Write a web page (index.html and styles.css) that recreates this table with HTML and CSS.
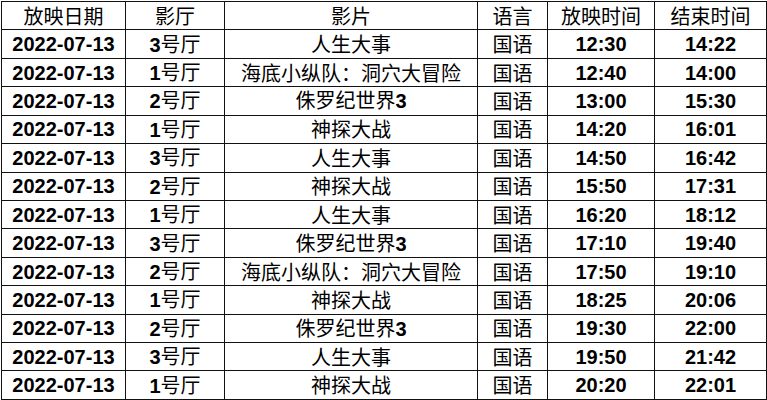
FILE: index.html
```html
<!DOCTYPE html>
<html lang="zh">
<head>
<meta charset="utf-8">
<title>放映时间表</title>
<link rel="stylesheet" href="styles.css">
</head>
<body>
<div class="page">
<table class="schedule">
  <colgroup>
    <col class="c-date"><col class="c-hall"><col class="c-film"><col class="c-lang"><col class="c-start"><col class="c-end">
  </colgroup>
  <thead>
    <tr><th>放映日期</th><th>影厅</th><th>影片</th><th>语言</th><th>放映时间</th><th>结束时间</th></tr>
  </thead>
  <tbody>
    <tr><td>2022-07-13</td><td>3<span class="zh">号厅</span></td><td class="zh">人生大事</td><td class="zh">国语</td><td>12:30</td><td>14:22</td></tr>
    <tr><td>2022-07-13</td><td>1<span class="zh">号厅</span></td><td class="zh">海底小纵队：洞穴大冒险</td><td class="zh">国语</td><td>12:40</td><td>14:00</td></tr>
    <tr><td>2022-07-13</td><td>2<span class="zh">号厅</span></td><td><span class="zh">侏罗纪世界</span>3</td><td class="zh">国语</td><td>13:00</td><td>15:30</td></tr>
    <tr><td>2022-07-13</td><td>1<span class="zh">号厅</span></td><td class="zh">神探大战</td><td class="zh">国语</td><td>14:20</td><td>16:01</td></tr>
    <tr><td>2022-07-13</td><td>3<span class="zh">号厅</span></td><td class="zh">人生大事</td><td class="zh">国语</td><td>14:50</td><td>16:42</td></tr>
    <tr><td>2022-07-13</td><td>2<span class="zh">号厅</span></td><td class="zh">神探大战</td><td class="zh">国语</td><td>15:50</td><td>17:31</td></tr>
    <tr><td>2022-07-13</td><td>1<span class="zh">号厅</span></td><td class="zh">人生大事</td><td class="zh">国语</td><td>16:20</td><td>18:12</td></tr>
    <tr><td>2022-07-13</td><td>3<span class="zh">号厅</span></td><td><span class="zh">侏罗纪世界</span>3</td><td class="zh">国语</td><td>17:10</td><td>19:40</td></tr>
    <tr><td>2022-07-13</td><td>2<span class="zh">号厅</span></td><td class="zh">海底小纵队：洞穴大冒险</td><td class="zh">国语</td><td>17:50</td><td>19:10</td></tr>
    <tr><td>2022-07-13</td><td>1<span class="zh">号厅</span></td><td class="zh">神探大战</td><td class="zh">国语</td><td>18:25</td><td>20:06</td></tr>
    <tr><td>2022-07-13</td><td>2<span class="zh">号厅</span></td><td><span class="zh">侏罗纪世界</span>3</td><td class="zh">国语</td><td>19:30</td><td>22:00</td></tr>
    <tr><td>2022-07-13</td><td>3<span class="zh">号厅</span></td><td class="zh">人生大事</td><td class="zh">国语</td><td>19:50</td><td>21:42</td></tr>
    <tr><td>2022-07-13</td><td>1<span class="zh">号厅</span></td><td class="zh">神探大战</td><td class="zh">国语</td><td>20:20</td><td>22:01</td></tr>
  </tbody>
</table>
</div>
</body>
</html>
```
FILE: styles.css
```css
html, body {
  margin: 0;
  padding: 0;
  background: #fff;
}
.page {
  padding: 1px 0 0 1px;
}
.schedule {
  border-collapse: collapse;
  table-layout: fixed;
  width: 765px;
  font-family: "Liberation Sans", Arial, "Noto Sans CJK SC", sans-serif;
  font-size: 20px;
  color: #000;
}
.c-date { width: 124px; }
.c-hall { width: 99px; }
.c-film { width: 253px; }
.c-lang { width: 70px; }
.c-start { width: 107px; }
.c-end { width: 112px; }
.schedule th,
.schedule td {
  border: 1px solid #111;
  height: 27.43px;
  padding: 0;
  text-align: center;
  vertical-align: middle;
  line-height: 20px;
  white-space: nowrap;
  overflow: hidden;
}
.schedule th {
  font-family: "Noto Sans CJK SC", sans-serif;
  font-weight: 400;
}
.schedule td {
  font-weight: 700;
}
.schedule .zh {
  font-family: "Noto Sans CJK SC", sans-serif;
  font-weight: 400;
}
```
